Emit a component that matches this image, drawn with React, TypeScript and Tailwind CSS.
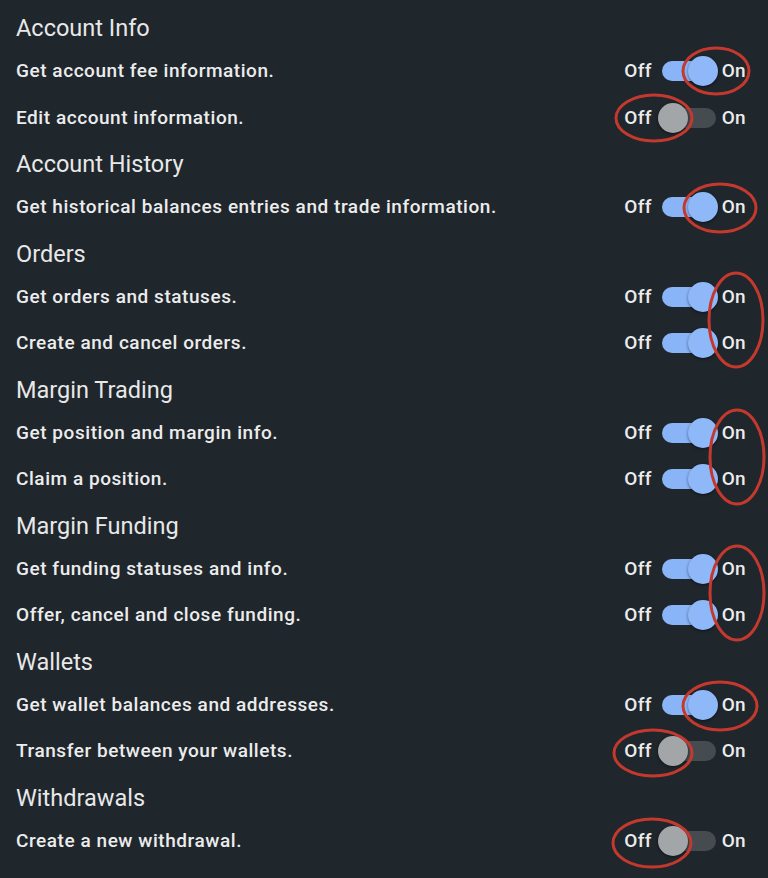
import React, { useState } from "react";

type Item = { label: string; on: boolean };
type Group = { title: string; items: Item[] };

const Groups: Group[] = [
  {
    title: "Account Info",
    items: [
      { label: "Get account fee information.", on: true },
      { label: "Edit account information.", on: false },
    ],
  },
  {
    title: "Account History",
    items: [{ label: "Get historical balances entries and trade information.", on: true }],
  },
  {
    title: "Orders",
    items: [
      { label: "Get orders and statuses.", on: true },
      { label: "Create and cancel orders.", on: true },
    ],
  },
  {
    title: "Margin Trading",
    items: [
      { label: "Get position and margin info.", on: true },
      { label: "Claim a position.", on: true },
    ],
  },
  {
    title: "Margin Funding",
    items: [
      { label: "Get funding statuses and info.", on: true },
      { label: "Offer, cancel and close funding.", on: true },
    ],
  },
  {
    title: "Wallets",
    items: [
      { label: "Get wallet balances and addresses.", on: true },
      { label: "Transfer between your wallets.", on: false },
    ],
  },
  {
    title: "Withdrawals",
    items: [{ label: "Create a new withdrawal.", on: false }],
  },
];

// red annotation marks drawn over the screenshot
const Marks = [
  { cx: 716, cy: 71, rx: 33, ry: 23 },
  { cx: 654, cy: 118, rx: 38, ry: 23 },
  { cx: 720, cy: 208, rx: 36, ry: 24 },
  { cx: 736, cy: 320, rx: 27, ry: 47 },
  { cx: 737, cy: 457, rx: 27, ry: 47 },
  { cx: 737, cy: 593, rx: 27, ry: 47 },
  { cx: 720, cy: 706, rx: 37, ry: 24 },
  { cx: 653, cy: 753, rx: 39, ry: 23 },
  { cx: 652, cy: 843, rx: 39, ry: 24 },
];

const Toggle = ({ on, onClick }: { on: boolean; onClick: () => void }) => (
  <button
    onClick={onClick}
    className={`relative h-[20px] w-[54px] rounded-full ${on ? "bg-[#8ab4f8]" : "bg-[#464b50]"}`}
  >
    <span
      className={`absolute top-1/2 -translate-y-1/2 h-[30px] w-[30px] rounded-full shadow-[0_1px_3px_rgba(0,0,0,0.5)] ${
        on ? "left-[26px] bg-[#8fb8f9]" : "left-[-4px] bg-[#a3a6a9]"
      }`}
    />
  </button>
);

const App = () => {
  const [state, setState] = useState(Groups.map((g) => g.items.map((i) => i.on)));

  const flip = (g: number, i: number) =>
    setState((prev) => prev.map((row, gi) => (gi === g ? row.map((v, ii) => (ii === i ? !v : v)) : row)));

  return (
    <main
      className="relative min-h-screen w-full bg-[#1f262c] pt-[5px] text-[#ececec]"
      style={{ fontFamily: "Roboto, 'Noto Sans', sans-serif" }}
    >
      {Groups.map((group, g) => (
        <section key={g}>
          <h2 className="h-[43px] pl-[16px] pt-[9px] text-[23.5px] font-normal leading-[28px] text-[#e8e8e8]">
            {group.title}
          </h2>
          {group.items.map((item, i) => (
            <div key={i} className="flex h-[46.5px] items-center justify-between pl-[16px] pr-[22px]">
              <p className="text-[19px] font-medium tracking-[0.55px]">{item.label}</p>
              <div className="flex items-center text-[19px] font-medium tracking-[0.3px]">
                <span className="mr-[10px]">Off</span>
                <Toggle on={state[g][i]} onClick={() => flip(g, i)} />
                <span className="ml-[6px]">On</span>
              </div>
            </div>
          ))}
        </section>
      ))}

      <svg className="pointer-events-none absolute left-0 top-0" width="768" height="878">
        {Marks.map((m, i) => (
          <ellipse key={i} cx={m.cx} cy={m.cy} rx={m.rx} ry={m.ry} fill="none" stroke="#c4392e" strokeWidth="3" />
        ))}
      </svg>
    </main>
  );
};

export default App;
